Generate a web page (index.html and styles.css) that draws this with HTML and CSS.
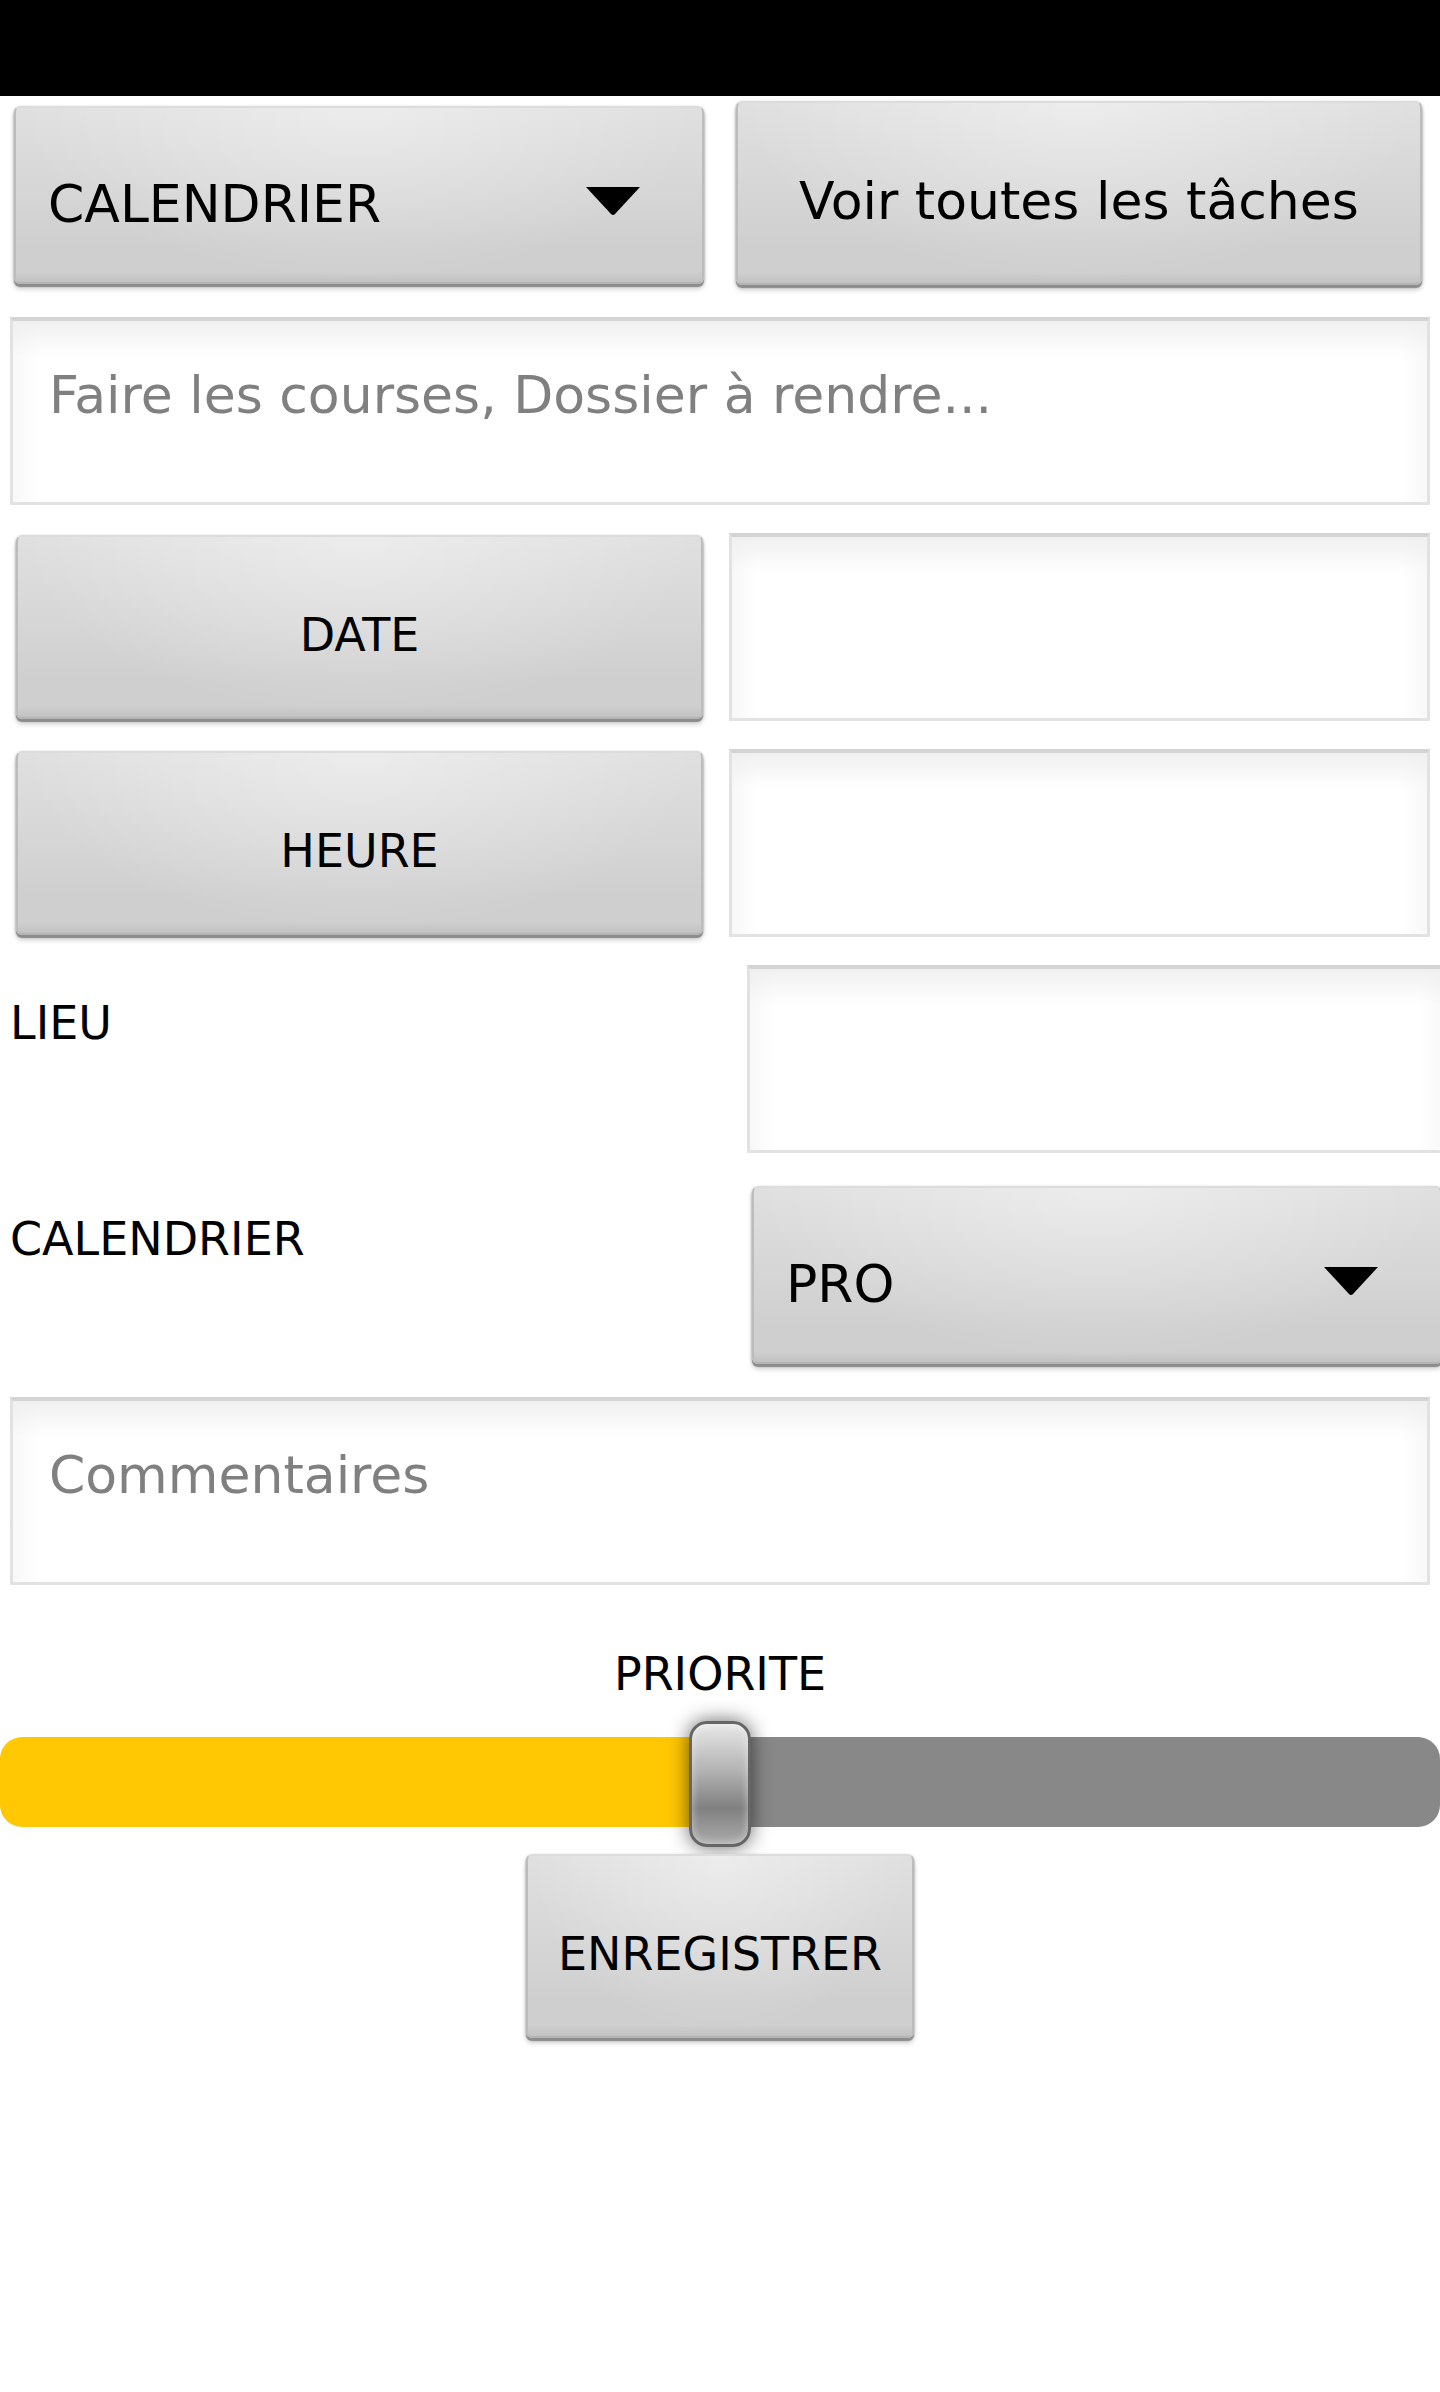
FILE: index.html
```
<!DOCTYPE html>
<html lang="fr">
<head>
    <meta charset="UTF-8">
    <meta name="viewport" content="width=device-width, initial-scale=1.0">
    <title>Calendrier</title>
    <link rel="stylesheet" href="styles.css">
</head>
<body>
    <div class="status-bar"></div>
    <form class="task-form">
        <div class="row row-top">
            <div class="spinner">
                <select aria-label="Affichage">
                    <option>CALENDRIER</option>
                </select>
                <svg class="arrow" viewBox="0 0 54 28" aria-hidden="true"><path d="M0 0H54L29 27Q27 29 25 27Z"/></svg>
            </div>
            <button type="button" class="btn">Voir toutes les tâches</button>
        </div>
        <div class="row">
            <textarea class="field" aria-label="Tâche" placeholder="Faire les courses, Dossier à rendre..."></textarea>
        </div>
        <div class="row row-picker">
            <button type="button" class="btn">DATE</button>
            <input type="text" class="field" aria-label="Date">
        </div>
        <div class="row row-picker">
            <button type="button" class="btn">HEURE</button>
            <input type="text" class="field" aria-label="Heure">
        </div>
        <div class="row row-label">
            <label for="lieu">LIEU</label>
            <input type="text" class="field" id="lieu">
        </div>
        <div class="row row-label">
            <label for="calendrier">CALENDRIER</label>
            <div class="spinner">
                <select id="calendrier">
                    <option>PRO</option>
                </select>
                <svg class="arrow" viewBox="0 0 54 28" aria-hidden="true"><path d="M0 0H54L29 27Q27 29 25 27Z"/></svg>
            </div>
        </div>
        <div class="row">
            <textarea class="field" aria-label="Commentaires" placeholder="Commentaires"></textarea>
        </div>
        <div class="priority">
            <label for="priorite">PRIORITE</label>
            <input type="range" id="priorite" min="0" max="100" value="50">
            <button type="submit" class="btn">ENREGISTRER</button>
        </div>
    </form>
</body>
</html>
```
FILE: styles.css
```
* {
    box-sizing: border-box;
}
body {
    margin: 0;
    background-color: #fff;
    color: #000;
    font-family: "DejaVu Sans", sans-serif;
    font-size: 46px;
    line-height: 56px;
    overflow-x: hidden;
}
.status-bar {
    height: 96px;
    background-color: #000;
}
.task-form {
    padding-bottom: 20px;
    overflow: hidden;
}
.row {
    display: flex;
    align-items: flex-start;
    min-height: 216px;
    padding: 5px 10px 0;
}

/* Buttons and drop-downs */
.btn, .spinner select {
    border: 2px solid;
    border-color: #dcdcdc #bcbcbc #b4b4b4;
    border-radius: 6px;
    background: radial-gradient(ellipse at 50% 0, rgba(255, 255, 255, 0.4), rgba(255, 255, 255, 0) 70%), linear-gradient(#e0e0e0, #cfcfcf 80%, #cfcfcf 94%, #c2c2c2);
    box-shadow: 0 3px 1px #8c8c8c, 0 5px 5px rgba(0, 0, 0, 0.2), 0 1px 3px rgba(0, 0, 0, 0.3);
    color: #000;
    font-family: inherit;
    cursor: pointer;
}
.btn {
    height: 184px;
    padding: 16px 30px 0;
    font-size: 46px;
}
.spinner {
    display: grid;
    margin-top: 5px;
}
.spinner select {
    grid-area: 1 / 1;
    width: 100%;
    height: 178px;
    padding: 18px 100px 0 32px;
    font-size: 52px;
    appearance: none;
}
.arrow {
    grid-area: 1 / 1;
    align-self: center;
    justify-self: end;
    width: 54px;
    height: 28px;
    margin: 12px 64px 0 0;
    pointer-events: none;
}

/* Text boxes */
.field {
    display: block;
    width: 100%;
    height: 188px;
    padding: 44px 36px;
    border: 3px solid #e2e2e2;
    border-top: 4px solid #d4d4d4;
    border-radius: 0;
    background: linear-gradient(#f0f0f0, rgba(255, 255, 255, 0) 36px), linear-gradient(to right, #f8f8f8, #fff 26px, #fff calc(100% - 26px), #f8f8f8);
    color: #000;
    font-family: inherit;
    font-size: 52px;
    line-height: 60px;
    resize: none;
}
.field::placeholder {
    color: #808080;
    opacity: 1;
}

.row-top {
    gap: 32px;
    padding-left: 14px;
    padding-right: 18px;
}
.row-top .spinner {
    flex: 1 1 0;
}
.row-top .btn {
    width: calc(50% - 18px);
    padding-left: 0;
    padding-right: 0;
    font-size: 52px;
}
.row-picker {
    gap: 26px;
    padding-left: 16px;
}
.row-picker .btn {
    flex: 1 1 0;
    margin-top: 2px;
}
.row-picker .field {
    width: calc(50% - 6px);
}

/* The right column of these rows runs past the edge of the screen */
.row-label {
    padding-right: 0;
}
.row-label label {
    flex: 0 0 calc(50% + 22px);
    padding-top: 30px;
}
.row-label .field {
    flex: 0 0 calc(50% - 14px);
}
.row-label .spinner {
    margin-left: 5px;
    flex: 0 0 calc(50% - 25px);
}

.priority {
    display: flex;
    flex-direction: column;
    align-items: center;
    padding-top: 38px;
}
.priority input {
    width: 100%;
    height: 132px;
    margin: 14px 0 6px;
    background: none;
    appearance: none;
}
.priority input::-webkit-slider-runnable-track {
    height: 90px;
    border-radius: 22px;
    background: linear-gradient(to right, #ffc803 50%, #888 50%);
}
.priority input::-webkit-slider-thumb {
    width: 62px;
    height: 126px;
    margin-top: -16px;
    border: 3px solid #666;
    border-radius: 18px;
    background: linear-gradient(#e8e8e8, #b4b4b4 38%, #808080 70%, #aaa);
    box-shadow: 0 0 20px rgba(0, 0, 0, 0.6), inset 0 0 8px rgba(255, 255, 255, 0.5);
    appearance: none;
}
```
